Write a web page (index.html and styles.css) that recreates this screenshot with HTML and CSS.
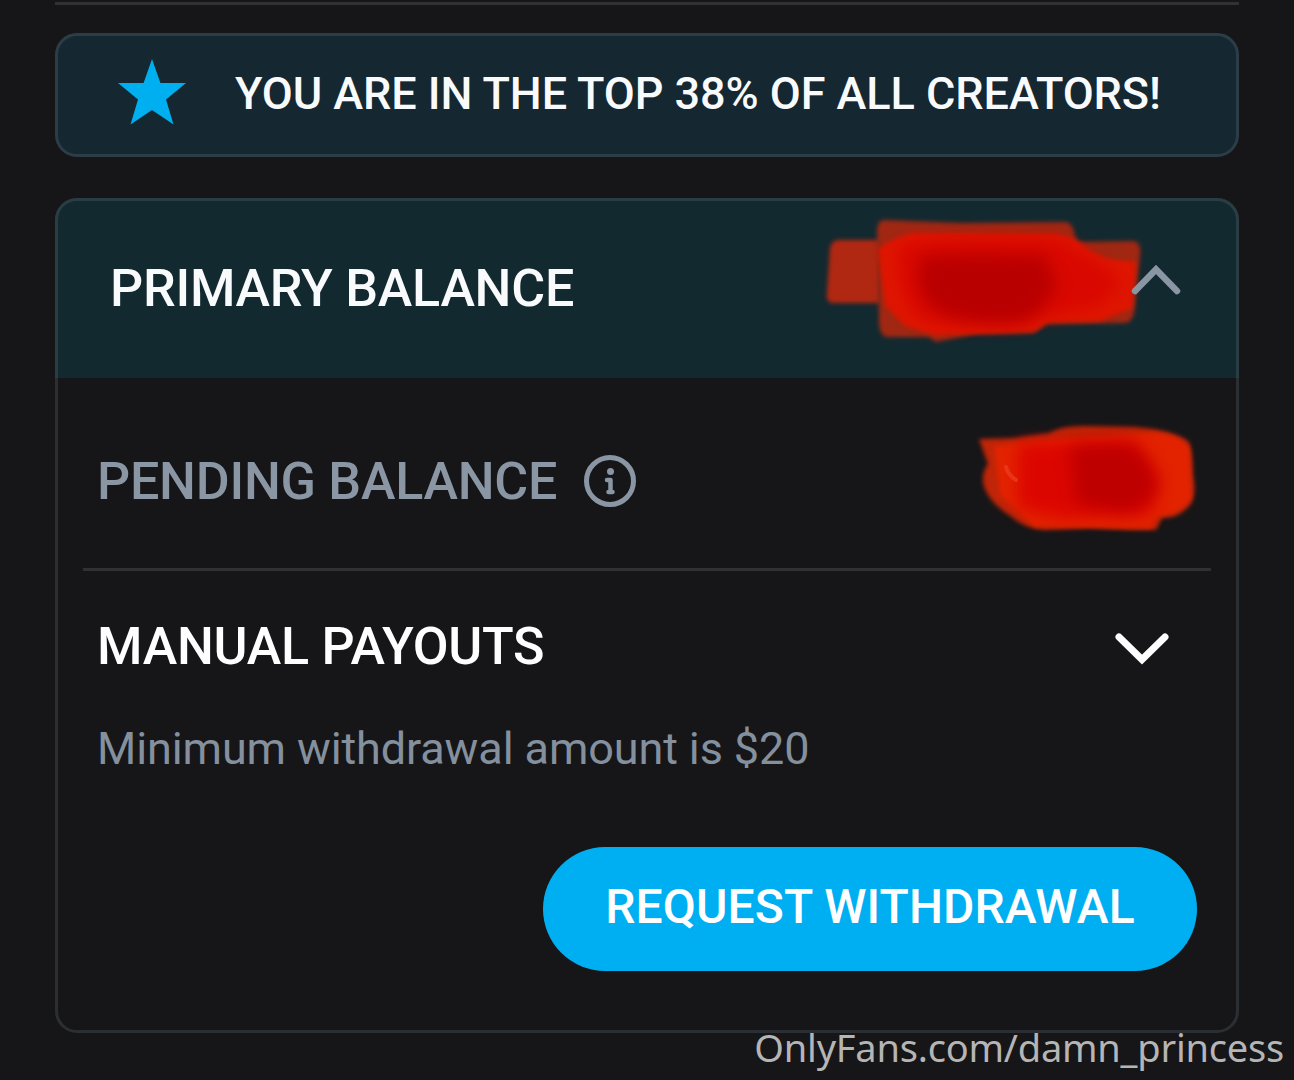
FILE: index.html
```html
<!DOCTYPE html>
<html lang="en">

<head>
    <meta charset="UTF-8">
    <meta name="viewport" content="width=device-width, initial-scale=1.0">
    <title>Balance</title>
    <link rel="stylesheet" href="styles.css">
</head>

<body>
    <div class="page">
        <div class="top-line"></div>

        <div class="banner">
            <svg class="star" width="70" height="66" viewBox="0 0 70 66">
                <path fill="#00aff0" d="M35 0 L43.4 24 L69 24 L49 40.5 L56.5 65.500 L35 51 L13.5 65.500 L21 40.5 L1 24 L26.6 24 Z" />
            </svg>
            <span class="banner-text">YOU ARE IN THE TOP 38% OF ALL CREATORS!</span>
        </div>

        <div class="card">
            <div class="card-header">
                <h2 class="primary">PRIMARY BALANCE</h2>
                <svg class="scribble" width="340" height="140" viewBox="815 210 340 140">
                    <defs>
                        <filter id="soft" x="-10%" y="-10%" width="120%" height="120%" color-interpolation-filters="sRGB"><feGaussianBlur stdDeviation="2" /></filter>
                        <filter id="softer" x="-40%" y="-40%" width="180%" height="180%" color-interpolation-filters="sRGB"><feGaussianBlur stdDeviation="8" /></filter>
                    </defs>
                    <path filter="url(#soft)" fill="#b12812" d="M838 240 H880 V303 H834 Q825 303 827 292 L830 248 Q832 240 838 240 Z" />
                    <path filter="url(#soft)" fill="#a02813" d="M884 220 L960 223 L1066 222 Q1073 223 1075 236 L1078 242 L1134 241 Q1142 243 1140 256 L1135 306 Q1134 323 1124 323 L1046 324 L1034 333 L975 334 L936 342 L928 337 L886 337 Q878 334 879 318 L877 232 Q877 220 884 220 Z" />
                    <path filter="url(#soft)" fill="#df1600" d="M878 250 Q884 242 912 233 L1058 234 Q1080 240 1088 250 L1108 259 L1136 262 L1132 308 L1100 321 L1048 322 L1034 331 L936 335 L905 326 L885 305 Z" />
                    <path filter="url(#softer)" fill="#d90800" d="M898 244 Q960 236 1060 240 L1104 266 L1122 282 L1100 306 L1044 316 Q1020 328 930 322 Q896 310 898 244 Z" />
                    <path filter="url(#softer)" fill="#b90000" d="M922 256 Q970 252 1046 256 L1056 286 Q1044 312 1022 322 Q960 326 936 310 Q910 290 922 256 Z" />
                </svg>
                <svg class="chevron-up" width="54" height="34" viewBox="0 0 54 34">
                    <path d="M6 28 L27 6.500 L48 28" fill="none" stroke="#8a96a3" stroke-width="6.500" stroke-linecap="round" />
                </svg>
            </div>

            <div class="card-body">
                <div class="pending">
                    <h2 class="pending-title">PENDING BALANCE</h2>
                    <svg class="info" width="52" height="52" viewBox="0 0 52 52">
                        <circle cx="26" cy="26" r="23.500" fill="none" stroke="#8a96a3" stroke-width="5" />
                        <circle cx="26.500" cy="16.500" r="3.500" fill="#8a96a3" />
                        <path d="M23 25 H26.500 V37 M24.500 37 H28.500" fill="none" stroke="#8a96a3" stroke-width="4.500" stroke-linecap="round" stroke-linejoin="round" />
                    </svg>
                    <svg class="scribble-small" width="230" height="120" viewBox="970 420 230 120">
                        <path filter="url(#soft)" fill="#c02508" d="M979 439 L1014 438 L1050 433 Q1060 426 1085 426 L1135 427 Q1175 430 1189 442 Q1193 452 1193 475 Q1197 495 1190 505 Q1178 519 1162 518 L1156 530 L1130 530 L1090 528 L1045 530 Q1025 529 1012 517 Q986 501 983 482 Q982 472 988 464 Z" />
                        <path filter="url(#soft)" fill="#e32300" d="M994 446 L1060 439 L1150 433 Q1178 434 1189 448 L1191 498 Q1180 514 1158 516 L1150 528 L1034 526 L1000 495 Z" />
                        <path filter="url(#softer)" fill="#dc0600" d="M1018 444 L1135 440 L1160 480 L1150 514 L1060 518 L1018 508 Z" />
                        <path filter="url(#softer)" fill="#be0000" d="M1070 446 L1130 444 Q1154 462 1156 488 Q1148 508 1124 512 L1076 504 Z" />
                        <path fill="none" stroke="#ee452c" stroke-width="4" stroke-linecap="round" opacity=".6" d="M1006 467 Q1008 475 1016 480" />
                    </svg>
                </div>

                <div class="payouts">
                    <h2 class="payouts-title">MANUAL PAYOUTS</h2>
                    <svg class="chevron-down" width="56" height="34" viewBox="0 0 56 34">
                        <path d="M5 6 L28 28.500 L51 6" fill="none" stroke="#fefefe" stroke-width="7" stroke-linecap="round" />
                    </svg>
                </div>
                <p class="minimum">Minimum withdrawal amount is $20</p>
                <button class="withdraw"><span>REQUEST WITHDRAWAL</span></button>
            </div>
        </div>
    </div>
    <div class="watermark">OnlyFans.com/damn_princess</div>
</body>

</html>
```

FILE: styles.css
```css
* {
    box-sizing: border-box;
}

body {
    margin: 0;
    height: 1080px;
    overflow: hidden;
    position: relative;
    background-color: #161618;
    color: #fefefe;
    font-family: Roboto, "Liberation Sans", sans-serif;
    font-weight: 500;
}

h2, p {
    margin: 0;
    white-space: nowrap;
}

h2 {
    font-weight: 500;
    font-size: 52px;
    line-height: 60px;
    letter-spacing: -0.25px;
}

svg {
    display: block;
    flex: none;
}

.page {
    padding: 2px 55px 0;
}

.top-line {
    height: 3px;
    background-color: #303135;
}

.banner {
    display: flex;
    align-items: flex-start;
    height: 124px;
    margin-top: 28px;
    padding: 23px 0 0 59px;
    border: 3px solid #2d3d47;
    border-radius: 22px;
    background-color: #152731;
}

.banner-text {
    margin-left: 48px;
    padding-top: 8px;
    font-size: 45px;
    line-height: 54px;
    letter-spacing: -0.06px;
    color: #f8fafb;
    white-space: nowrap;
}

.card {
    height: 835px;
    margin-top: 41px;
    border: 3px solid #2b2e32;
    border-radius: 22px;
}

.card-header {
    display: flex;
    height: 180px;
    margin: -3px -3px 0;
    padding: 12px 0 0 52px;
    border: 3px solid #2a3c44;
    border-bottom: none;
    border-radius: 22px 22px 0 0;
    background-color: #132930;
}

.primary {
    width: 705px;
    padding-top: 46px;
    color: #f8fafb;
}

.scribble {
    margin-top: -3px;
}

.chevron-up {
    margin: 50px 0 0 -26px;
}

.card-body {
    display: flex;
    flex-direction: column;
    padding: 0 25px;
}

.pending {
    display: flex;
    height: 193px;
    padding-left: 14px;
    border-bottom: 3px solid #303135;
}

.pending-title {
    width: 487px;
    padding-top: 74px;
    color: #8a96a3;
}

.info {
    margin-top: 77px;
}

.scribble-small {
    margin: 42px 0 0 334px;
}

.payouts {
    display: flex;
    justify-content: space-between;
    padding: 46px 41px 0 14px;
}

.chevron-down {
    margin-top: 14px;
}

.minimum {
    padding: 45px 0 0 14px;
    font-size: 45px;
    line-height: 54px;
    letter-spacing: -0.12px;
    font-weight: 400;
    color: #84909d;
}

.withdraw {
    align-self: flex-end;
    width: 654px;
    height: 124px;
    margin: 71px 14px 0 0;
    padding: 0 0 4px;
    border: none;
    border-radius: 62px;
    background-color: #00aff2;
    color: #fefefe;
    font: 500 48px/56px Roboto, "Liberation Sans", sans-serif;
    letter-spacing: 0.1px;
    white-space: nowrap;
}

.watermark {
    position: absolute;
    right: 10px;
    bottom: 7px;
    font: 400 38px/52px "Noto Sans", "Open Sans", sans-serif;
    letter-spacing: -0.21px;
    color: #b5b5b6;
    white-space: nowrap;
}
```
